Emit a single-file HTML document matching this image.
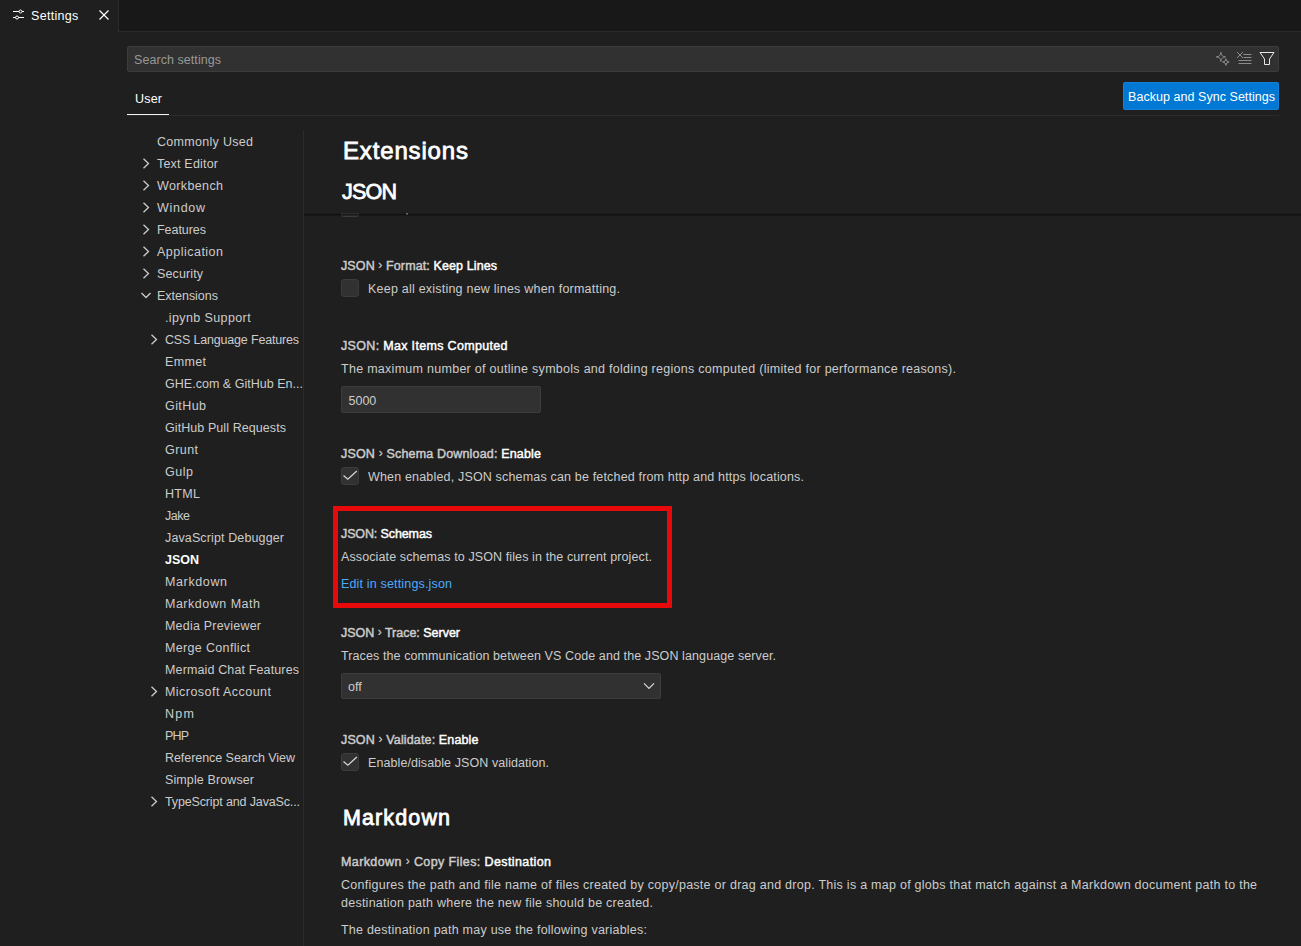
<!DOCTYPE html>
<html><head><meta charset="utf-8">
<style>
*{box-sizing:border-box;margin:0;padding:0}
html,body{width:1301px;height:946px;overflow:hidden;background:#1f1f1f;font-family:"Liberation Sans",sans-serif;color:#cccccc}
.tx{position:absolute;white-space:nowrap}
.tx[style*="font-weight:600"]{font-weight:400 !important;-webkit-text-stroke:0.45px currentColor}
.tx[style*="font-size:24px"],.tx[style*="font-size:21.5px"]{-webkit-text-stroke:0.8px currentColor}
.ch{font-weight:400;-webkit-text-stroke:0.2px currentColor;font-size:12px;position:relative;top:-1px}
.r{position:absolute}
.cb{position:absolute;left:341px;width:18px;height:18px;background:#313131;border:1px solid #3c3c3c;border-radius:3px}
svg{position:absolute;overflow:visible}
</style></head><body>
<div class="r" style="left:0;top:0;width:1301px;height:32px;background:#181818;border-bottom:1px solid #2b2b2b"></div>
<div class="r" style="left:0;top:0;width:119px;height:32px;background:#1f1f1f;border-right:1px solid #2b2b2b"></div>
<!-- settings icon -->
<svg style="left:0;top:0" width="130" height="31">
 <g stroke="#ffffff" stroke-width="1" fill="none">
  <line x1="13" y1="11.5" x2="19" y2="11.5"/><line x1="22" y1="11.5" x2="24" y2="11.5"/>
  <circle cx="20.5" cy="11.5" r="1.5"/>
  <line x1="13" y1="17.5" x2="15.5" y2="17.5"/><line x1="18.5" y1="17.5" x2="24" y2="17.5"/>
  <circle cx="17" cy="17.5" r="1.5"/>
 </g>
 <g stroke="#ffffff" stroke-width="1.2" fill="none">
  <line x1="99.5" y1="10.5" x2="108.5" y2="19.5"/><line x1="108.5" y1="10.5" x2="99.5" y2="19.5"/>
 </g>
</svg>
<div class="r" style="left:127px;top:46px;width:1152px;height:26px;background:#313131;border:1px solid #3c3c3c;border-radius:2px"></div>
<svg style="left:0;top:0" width="1301" height="120">
 <g stroke="#8c8c8c" stroke-width="1" fill="none" stroke-linejoin="round">
  <path d="M1220.9 52.3 Q1221.13 56.67 1225.5 56.9 Q1221.13 57.129999999999995 1220.9 61.5 Q1220.67 57.129999999999995 1216.3000000000002 56.9 Q1220.67 56.67 1220.9 52.3Z"/>
<path d="M1225.9 58.7 Q1226.065 61.835 1229.2 62.0 Q1226.065 62.165 1225.9 65.3 Q1225.7350000000001 62.165 1222.6000000000001 62.0 Q1225.7350000000001 61.835 1225.9 58.7Z"/>
</g>
 <g stroke="#8c8c8c" stroke-width="1" fill="none">
  <line x1="1237" y1="52" x2="1243" y2="58"/><line x1="1243" y1="52" x2="1237" y2="58"/>
  <line x1="1243.5" y1="54.5" x2="1251.5" y2="54.5"/><line x1="1243.5" y1="57.5" x2="1251.5" y2="57.5"/>
  <line x1="1238.5" y1="60.5" x2="1251.5" y2="60.5"/><line x1="1238.5" y1="63.5" x2="1251.5" y2="63.5"/>
 </g>
 <path d="M1260 52.5 L1274 52.5 L1269.5 59 L1269.5 64.5 L1264.5 64.5 L1264.5 59 Z" stroke="#e8e8e8" stroke-width="1" fill="none" stroke-linejoin="round"/>
</svg>
<div class="r" style="left:1123px;top:82px;width:156px;height:28px;background:#0078d4;border:1px solid rgba(255,255,255,0.07);border-radius:2px"></div>
<div class="r" style="left:127px;top:115px;width:1152px;height:1px;background:#2b2b2b"></div>
<div class="r" style="left:127px;top:114px;width:42px;height:1px;background:#f2f2f2"></div>
<div class="r" style="left:303px;top:130px;width:1px;height:816px;background:#2b2b2b"></div>
<!-- TOC chevrons -->
<svg style="left:0;top:0" width="310" height="946">
 <g stroke="#cccccc" stroke-width="1.3" fill="none">
  <path d="M143.5 158.7 L148.5 163.5 L143.5 168.3"/>
  <path d="M143.5 180.7 L148.5 185.5 L143.5 190.3"/>
  <path d="M143.5 202.7 L148.5 207.5 L143.5 212.3"/>
  <path d="M143.5 224.7 L148.5 229.5 L143.5 234.3"/>
  <path d="M143.5 246.7 L148.5 251.5 L143.5 256.3"/>
  <path d="M143.5 268.7 L148.5 273.5 L143.5 278.3"/>
  <path d="M141.5 293 L146 297.5 L150.5 293"/>
  <path d="M151.5 334.7 L156.5 339.5 L151.5 344.3"/>
  <path d="M151.5 686.7 L156.5 691.5 L151.5 696.3"/>
  <path d="M151.5 796.7 L156.5 801.5 L151.5 806.3"/>
 </g>
</svg>
<!-- sticky header shadow -->
<div class="r" style="left:341px;top:213px;width:18px;height:4px;border:1px solid #3c3c3c;border-top:none;border-radius:0 0 3px 3px;background:#313131"></div>
<div class="r" style="left:406px;top:213px;width:2px;height:2px;background:#777"></div>
<div class="r" style="left:304px;top:213px;width:997px;height:1px;background:rgba(0,0,0,0.08)"></div>
<div class="r" style="left:304px;top:214px;width:997px;height:1px;background:rgba(0,0,0,0.45)"></div>
<div class="r" style="left:304px;top:215px;width:997px;height:1px;background:rgba(0,0,0,0.22)"></div>
<!-- checkboxes -->
<div class="cb" style="top:279px"></div>
<div class="r" style="left:341px;top:386px;width:200px;height:27px;background:#313131;border:1px solid #3c3c3c;border-radius:2px"></div>
<div class="cb" style="top:467px"></div>
<div class="cb" style="top:753px"></div>
<div class="r" style="left:341px;top:673px;width:320px;height:26px;background:#313131;border:1px solid #3c3c3c;border-radius:2px"></div>
<svg style="left:0;top:0" width="700" height="946">
 <g stroke="#d8d8d8" stroke-width="1.2" fill="none">
  <path d="M343.5 475.5 L347.8 479.3 L356.8 471"/>
  <path d="M343.5 761.5 L347.8 765.3 L356.8 757"/>
  <path d="M644 683.3 L649 688.4 L654 683.3"/>
 </g>
</svg>
<!-- red rect -->
<div class="r" style="left:333px;top:506px;width:339px;height:102px;border:5px solid #e80a0a"></div>
<div class="tx" id="t0" style="left:31px;top:8.67px;font-size:12.5px;line-height:14px;font-weight:400;color:#ffffff;letter-spacing:0.304px">Settings</div>
<div class="tx" id="t1" style="left:134px;top:52.67px;font-size:12.5px;line-height:14px;font-weight:400;color:#989898;letter-spacing:0.059px">Search settings</div>
<div class="tx" id="t2" style="left:135px;top:91.67px;font-size:12.5px;line-height:14px;font-weight:400;color:#ffffff;letter-spacing:0.198px">User</div>
<div class="tx" id="t3" style="left:1128px;top:89.67px;font-size:12.5px;line-height:14px;font-weight:400;color:#ffffff;letter-spacing:0.046px">Backup and Sync Settings</div>
<div class="tx" id="t4" style="left:157px;top:134.67px;font-size:12.5px;line-height:14px;font-weight:400;color:#cccccc;letter-spacing:0.301px">Commonly Used</div>
<div class="tx" id="t5" style="left:157px;top:156.67px;font-size:12.5px;line-height:14px;font-weight:400;color:#cccccc;letter-spacing:0.194px">Text Editor</div>
<div class="tx" id="t6" style="left:157px;top:178.67px;font-size:12.5px;line-height:14px;font-weight:400;color:#cccccc;letter-spacing:0.375px">Workbench</div>
<div class="tx" id="t7" style="left:157px;top:200.67px;font-size:12.5px;line-height:14px;font-weight:400;color:#cccccc;letter-spacing:0.706px">Window</div>
<div class="tx" id="t8" style="left:157px;top:222.67px;font-size:12.5px;line-height:14px;font-weight:400;color:#cccccc;letter-spacing:-0.049px">Features</div>
<div class="tx" id="t9" style="left:157px;top:244.67px;font-size:12.5px;line-height:14px;font-weight:400;color:#cccccc;letter-spacing:0.484px">Application</div>
<div class="tx" id="t10" style="left:157px;top:266.67px;font-size:12.5px;line-height:14px;font-weight:400;color:#cccccc;letter-spacing:0.121px">Security</div>
<div class="tx" id="t11" style="left:157px;top:288.67px;font-size:12.5px;line-height:14px;font-weight:400;color:#cccccc;letter-spacing:-0.017px">Extensions</div>
<div class="tx" id="t12" style="left:165px;top:310.67px;font-size:12.5px;line-height:14px;font-weight:400;color:#cccccc;letter-spacing:0.384px">.ipynb Support</div>
<div class="tx" id="t13" style="left:165px;top:332.67px;font-size:12.5px;line-height:14px;font-weight:400;color:#cccccc;letter-spacing:-0.180px">CSS Language Features</div>
<div class="tx" id="t14" style="left:165px;top:354.67px;font-size:12.5px;line-height:14px;font-weight:400;color:#cccccc;letter-spacing:0.352px">Emmet</div>
<div class="tx" id="t15" style="left:165px;top:376.67px;font-size:12.5px;line-height:14px;font-weight:400;color:#cccccc;letter-spacing:0.022px">GHE.com &amp; GitHub En...</div>
<div class="tx" id="t16" style="left:165px;top:398.67px;font-size:12.5px;line-height:14px;font-weight:400;color:#cccccc;letter-spacing:0.419px">GitHub</div>
<div class="tx" id="t17" style="left:165px;top:420.67px;font-size:12.5px;line-height:14px;font-weight:400;color:#cccccc;letter-spacing:0.078px">GitHub Pull Requests</div>
<div class="tx" id="t18" style="left:165px;top:442.67px;font-size:12.5px;line-height:14px;font-weight:400;color:#cccccc;letter-spacing:0.434px">Grunt</div>
<div class="tx" id="t19" style="left:165px;top:464.67px;font-size:12.5px;line-height:14px;font-weight:400;color:#cccccc;letter-spacing:0.531px">Gulp</div>
<div class="tx" id="t20" style="left:165px;top:486.67px;font-size:12.5px;line-height:14px;font-weight:400;color:#cccccc;letter-spacing:0.323px">HTML</div>
<div class="tx" id="t21" style="left:165px;top:508.67px;font-size:12.5px;line-height:14px;font-weight:400;color:#cccccc;letter-spacing:-0.469px">Jake</div>
<div class="tx" id="t22" style="left:165px;top:530.67px;font-size:12.5px;line-height:14px;font-weight:400;color:#cccccc;letter-spacing:0.126px">JavaScript Debugger</div>
<div class="tx" id="t23" style="left:165px;top:552.67px;font-size:12.5px;line-height:14px;font-weight:700;color:#ffffff;letter-spacing:-0.016px">JSON</div>
<div class="tx" id="t24" style="left:165px;top:574.67px;font-size:12.5px;line-height:14px;font-weight:400;color:#cccccc;letter-spacing:0.618px">Markdown</div>
<div class="tx" id="t25" style="left:165px;top:596.67px;font-size:12.5px;line-height:14px;font-weight:400;color:#cccccc;letter-spacing:0.505px">Markdown Math</div>
<div class="tx" id="t26" style="left:165px;top:618.67px;font-size:12.5px;line-height:14px;font-weight:400;color:#cccccc;letter-spacing:0.208px">Media Previewer</div>
<div class="tx" id="t27" style="left:165px;top:640.67px;font-size:12.5px;line-height:14px;font-weight:400;color:#cccccc;letter-spacing:0.339px">Merge Conflict</div>
<div class="tx" id="t28" style="left:165px;top:662.67px;font-size:12.5px;line-height:14px;font-weight:400;color:#cccccc;letter-spacing:0.134px">Mermaid Chat Features</div>
<div class="tx" id="t29" style="left:165px;top:684.67px;font-size:12.5px;line-height:14px;font-weight:400;color:#cccccc;letter-spacing:0.459px">Microsoft Account</div>
<div class="tx" id="t30" style="left:165px;top:706.67px;font-size:12.5px;line-height:14px;font-weight:400;color:#cccccc;letter-spacing:1.297px">Npm</div>
<div class="tx" id="t31" style="left:165px;top:728.67px;font-size:12.5px;line-height:14px;font-weight:400;color:#cccccc;letter-spacing:-0.852px">PHP</div>
<div class="tx" id="t32" style="left:165px;top:750.67px;font-size:12.5px;line-height:14px;font-weight:400;color:#cccccc;letter-spacing:-0.055px">Reference Search View</div>
<div class="tx" id="t33" style="left:165px;top:772.67px;font-size:12.5px;line-height:14px;font-weight:400;color:#cccccc;letter-spacing:0.113px">Simple Browser</div>
<div class="tx" id="t34" style="left:165px;top:794.67px;font-size:12.5px;line-height:14px;font-weight:400;color:#cccccc;letter-spacing:-0.142px">TypeScript and JavaSc...</div>
<div class="tx" id="t35" style="left:343px;top:136.68px;font-size:24px;line-height:28px;font-weight:600;color:#ffffff;letter-spacing:0.844px">Extensions</div>
<div class="tx" id="t36" style="left:342px;top:179.55px;font-size:21.5px;line-height:25px;font-weight:600;color:#ffffff;letter-spacing:-0.781px">JSON</div>
<div class="tx" id="t37" style="left:343px;top:806.05px;font-size:21.5px;line-height:25px;font-weight:600;color:#ffffff;letter-spacing:1.116px">Markdown</div>
<div class="tx" id="t38" style="left:341px;top:258.67px;font-size:12.5px;line-height:14px;font-weight:600;color:#cccccc;letter-spacing:0.109px">JSON <span class="ch">›</span> Format: <span style="color:#fff">Keep Lines</span></div>
<div class="tx" id="t39" style="left:368px;top:281.67px;font-size:12.5px;line-height:14px;font-weight:400;color:#cccccc;letter-spacing:0.221px">Keep all existing new lines when formatting.</div>
<div class="tx" id="t40" style="left:341px;top:338.67px;font-size:12.5px;line-height:14px;font-weight:600;color:#cccccc;letter-spacing:0.322px">JSON: <span style="color:#fff">Max Items Computed</span></div>
<div class="tx" id="t41" style="left:341px;top:361.67px;font-size:12.5px;line-height:14px;font-weight:400;color:#cccccc;letter-spacing:0.279px">The maximum number of outline symbols and folding regions computed (limited for performance reasons).</div>
<div class="tx" id="t42" style="left:348.5px;top:393.67px;font-size:12.5px;line-height:14px;font-weight:400;color:#cccccc;letter-spacing:0.000px">5000</div>
<div class="tx" id="t43" style="left:341px;top:446.67px;font-size:12.5px;line-height:14px;font-weight:600;color:#cccccc;letter-spacing:0.169px">JSON <span class="ch">›</span> Schema Download: <span style="color:#fff">Enable</span></div>
<div class="tx" id="t44" style="left:368px;top:469.67px;font-size:12.5px;line-height:14px;font-weight:400;color:#cccccc;letter-spacing:0.171px">When enabled, JSON schemas can be fetched from http and https locations.</div>
<div class="tx" id="t45" style="left:341px;top:526.67px;font-size:12.5px;line-height:14px;font-weight:600;color:#cccccc;letter-spacing:-0.117px">JSON: <span style="color:#fff">Schemas</span></div>
<div class="tx" id="t46" style="left:341px;top:549.67px;font-size:12.5px;line-height:14px;font-weight:400;color:#cccccc;letter-spacing:0.111px">Associate schemas to JSON files in the current project.</div>
<div class="tx" id="t47" style="left:341px;top:576.67px;font-size:12.5px;line-height:14px;font-weight:400;color:#4daafc;letter-spacing:0.165px">Edit in settings.json</div>
<div class="tx" id="t48" style="left:341px;top:625.67px;font-size:12.5px;line-height:14px;font-weight:600;color:#cccccc;letter-spacing:-0.017px">JSON <span class="ch">›</span> Trace: <span style="color:#fff">Server</span></div>
<div class="tx" id="t49" style="left:341px;top:648.67px;font-size:12.5px;line-height:14px;font-weight:400;color:#cccccc;letter-spacing:0.098px">Traces the communication between VS Code and the JSON language server.</div>
<div class="tx" id="t50" style="left:348px;top:679.67px;font-size:12.5px;line-height:14px;font-weight:400;color:#cccccc;letter-spacing:0.000px">off</div>
<div class="tx" id="t51" style="left:341px;top:732.67px;font-size:12.5px;line-height:14px;font-weight:600;color:#cccccc;letter-spacing:0.140px">JSON <span class="ch">›</span> Validate: <span style="color:#fff">Enable</span></div>
<div class="tx" id="t52" style="left:368px;top:755.67px;font-size:12.5px;line-height:14px;font-weight:400;color:#cccccc;letter-spacing:0.081px">Enable/disable JSON validation.</div>
<div class="tx" id="t53" style="left:341px;top:854.67px;font-size:12.5px;line-height:14px;font-weight:600;color:#cccccc;letter-spacing:0.389px">Markdown <span class="ch">›</span> Copy Files: <span style="color:#fff">Destination</span></div>
<div class="tx" id="t54" style="left:341px;top:877.67px;font-size:12.5px;line-height:14px;font-weight:400;color:#cccccc;letter-spacing:0.263px">Configures the path and file name of files created by copy/paste or drag and drop. This is a map of globs that match against a Markdown document path to the</div>
<div class="tx" id="t55" style="left:341px;top:895.67px;font-size:12.5px;line-height:14px;font-weight:400;color:#cccccc;letter-spacing:0.249px">destination path where the new file should be created.</div>
<div class="tx" id="t56" style="left:341px;top:922.67px;font-size:12.5px;line-height:14px;font-weight:400;color:#cccccc;letter-spacing:0.232px">The destination path may use the following variables:</div>
</body></html>
